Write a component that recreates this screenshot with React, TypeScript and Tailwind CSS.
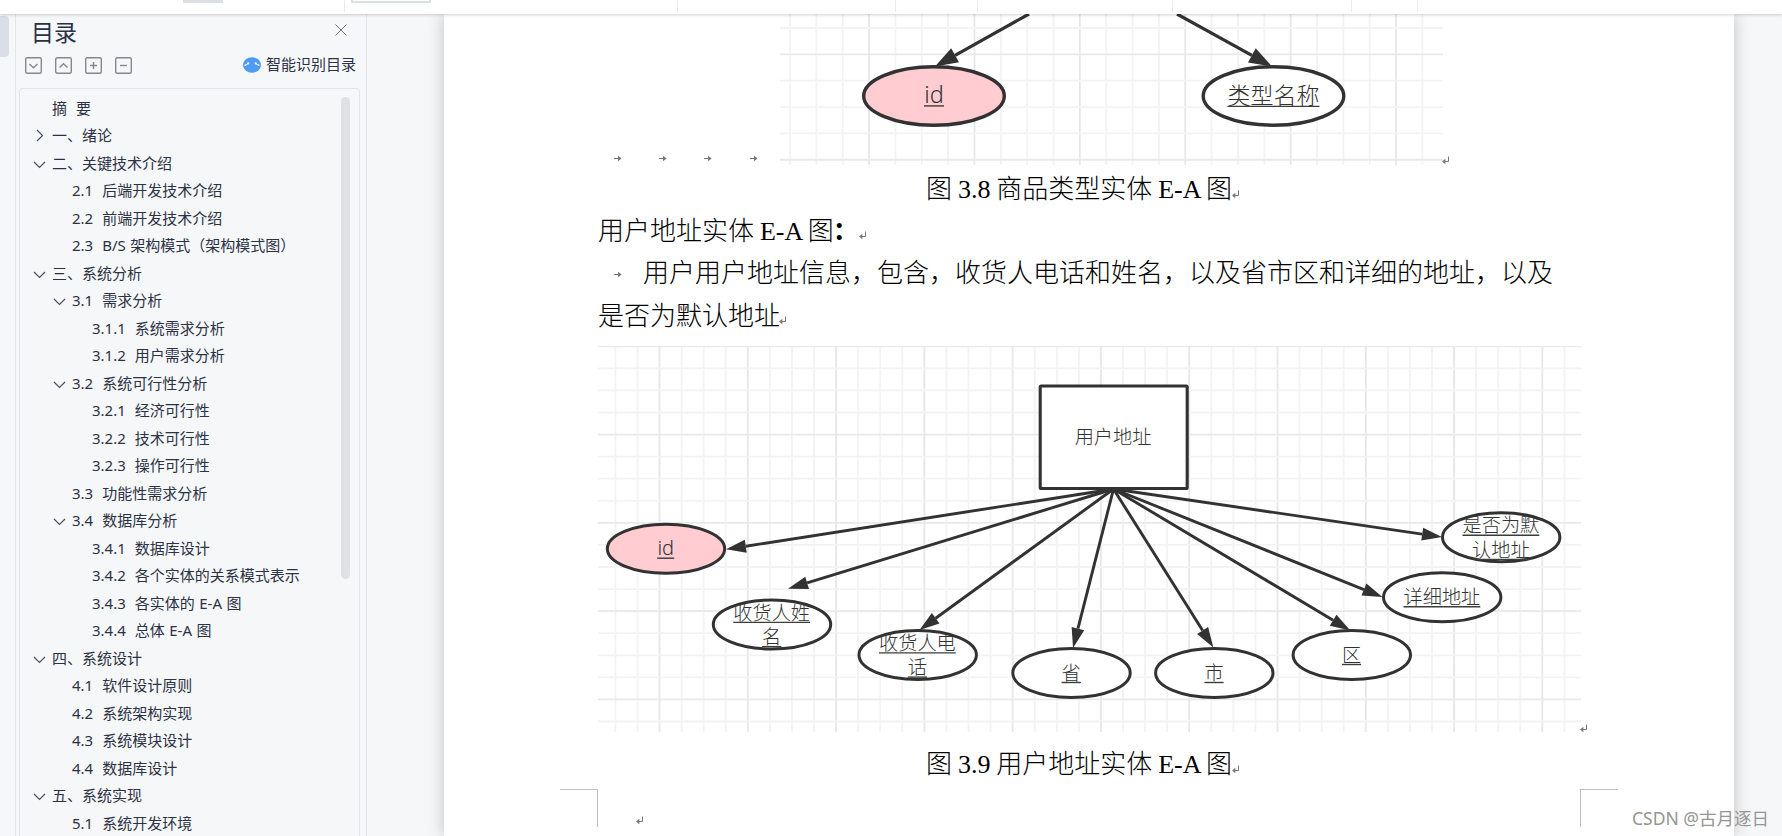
import { ReactNode } from 'react'

const outline = [
  { level: 0, label: '摘  要', arrow: '' },
  { level: 0, label: '一、绪论', arrow: 'right' },
  { level: 0, label: '二、关键技术介绍', arrow: 'down' },
  { level: 1, label: '2.1  后端开发技术介绍', arrow: '' },
  { level: 1, label: '2.2  前端开发技术介绍', arrow: '' },
  { level: 1, label: '2.3  B/S 架构模式（架构模式图）', arrow: '' },
  { level: 0, label: '三、系统分析', arrow: 'down' },
  { level: 1, label: '3.1  需求分析', arrow: 'down' },
  { level: 2, label: '3.1.1  系统需求分析', arrow: '' },
  { level: 2, label: '3.1.2  用户需求分析', arrow: '' },
  { level: 1, label: '3.2  系统可行性分析', arrow: 'down' },
  { level: 2, label: '3.2.1  经济可行性', arrow: '' },
  { level: 2, label: '3.2.2  技术可行性', arrow: '' },
  { level: 2, label: '3.2.3  操作可行性', arrow: '' },
  { level: 1, label: '3.3  功能性需求分析', arrow: '' },
  { level: 1, label: '3.4  数据库分析', arrow: 'down' },
  { level: 2, label: '3.4.1  数据库设计', arrow: '' },
  { level: 2, label: '3.4.2  各个实体的关系模式表示', arrow: '' },
  { level: 2, label: '3.4.3  各实体的 E-A 图', arrow: '' },
  { level: 2, label: '3.4.4  总体 E-A 图', arrow: '' },
  { level: 0, label: '四、系统设计', arrow: 'down' },
  { level: 1, label: '4.1  软件设计原则', arrow: '' },
  { level: 1, label: '4.2  系统架构实现', arrow: '' },
  { level: 1, label: '4.3  系统模块设计', arrow: '' },
  { level: 1, label: '4.4  数据库设计', arrow: '' },
  { level: 0, label: '五、系统实现', arrow: 'down' },
  { level: 1, label: '5.1  系统开发环境', arrow: '' },
]

const indents = ['pl-[13px]', 'pl-[33px]', 'pl-[53px]']

const toolIcons = ['M4.5 7l4 3.8L12.5 7', 'M4.5 10.5l4-3.8L12.5 10.5', 'M5 8.5h7M8.5 5v7', 'M5 8.5h7']

// coordinates are local to the 983x386 canvas
const attributes = [
  { x: 68, y: 202.7, lines: ['id'], tip: [128, 203.3], pink: true },
  { x: 174, y: 278.5, lines: ['收货人姓', '名'], tip: [190, 242.7] },
  { x: 319.7, y: 309, lines: ['收货人电', '话'], tip: [321.5, 284] },
  { x: 473.5, y: 327, lines: ['省'], tip: [475, 302] },
  { x: 616.3, y: 327, lines: ['市'], tip: [615.3, 301.5] },
  { x: 753.8, y: 309, lines: ['区'], tip: [752.3, 284.5] },
  { x: 844.2, y: 251.3, lines: ['详细地址'], tip: [784.5, 251] },
  { x: 903.2, y: 191.3, lines: ['是否为默', '认地址'], tip: [844, 191] },
]

function ReturnMark({ className = '' }: { className?: string }) {
  return (
    <svg width="8" height="9" viewBox="0 0 8 9" className={`shrink-0 ${className}`}>
      <path d="M6.5 0.5V5.5H2" fill="none" stroke="#777" />
      <path d="M0 5.5L3.4 2.8V8.2Z" fill="#777" />
    </svg>
  )
}

function TabMark({ className = '' }: { className?: string }) {
  return (
    <svg width="8" height="7" viewBox="0 0 8 7" className={`shrink-0 ${className}`}>
      <path d="M0 3.5H6" stroke="#777" />
      <path d="M4 0.8L7.6 3.5L4 6.2Z" fill="#777" />
    </svg>
  )
}

type GridProps = { w: number; h: number; x0: number; y0: number; step: number; majorX: number; majorY: number }

function Grid({ w, h, x0, y0, step, majorX, majorY }: GridProps) {
  const xs = Array.from({ length: Math.ceil((w - x0) / step) }, (_, i) => x0 + i * step)
  const ys = Array.from({ length: Math.ceil((h - y0) / step) }, (_, i) => y0 + i * step)
  return (
    <g strokeWidth="1.8">
      {xs.map((x, i) => (
        <line key={i} x1={x} x2={x} y1="0" y2={h} stroke={i % 4 === majorX ? '#e7e7e7' : '#f3f3f3'} />
      ))}
      {ys.map((y, i) => (
        <line key={i} x1="0" x2={w} y1={y} y2={y} stroke={i % 4 === majorY ? '#e9e9e9' : '#f3f3f3'} />
      ))}
    </g>
  )
}

function Arrow({ from, to, size, half, width }: { from: number[]; to: number[]; size: number; half: number; width: number }) {
  const dx = to[0] - from[0]
  const dy = to[1] - from[1]
  const len = Math.hypot(dx, dy)
  const ux = dx / len
  const uy = dy / len
  const bx = to[0] - ux * size
  const by = to[1] - uy * size
  return (
    <g>
      <line x1={from[0]} y1={from[1]} x2={bx} y2={by} stroke="#323232" strokeWidth={width} />
      <polygon
        fill="#323232"
        points={`${to[0]},${to[1]} ${bx - uy * half},${by + ux * half} ${bx + uy * half},${by - ux * half}`}
      />
    </g>
  )
}

function Label({ x, y, size, children, width }: { x: number; y: number; size: number; children: string; width: number }) {
  return (
    <g>
      <text x={x} y={y} fontSize={size} textAnchor="middle" fill="#323232">{children}</text>
      <line x1={x - width / 2} x2={x + width / 2} y1={y + 2.9} y2={y + 2.9} stroke="#3c3c3c" strokeWidth="1.4" />
    </g>
  )
}

function TypeFigure() {
  return (
    <svg width="663" height="151" viewBox="0 0 663 151" className="shrink-0 font-['Noto_Sans','Noto_Sans_CJK_SC',sans-serif] font-light">
      <Grid w={663} h={151} x0={10} y0={14} step={26.35} majorX={3} majorY={1} />
      <Arrow from={[249, 0]} to={[155, 52.5]} size={23} half={8} width={3.2} />
      <Arrow from={[397, 0]} to={[492, 52.5]} size={23} half={8} width={3.2} />
      <ellipse cx="154" cy="82" rx="70.3" ry="29.2" fill="#ffccd2" stroke="#323232" strokeWidth="3.4" />
      <ellipse cx="493.5" cy="82" rx="70.3" ry="29.2" fill="#fff" stroke="#323232" strokeWidth="3.4" />
      <Label x={154} y={89} size={23.5} width={20}>id</Label>
      <Label x={493.5} y={89.5} size={23} width={92}>类型名称</Label>
    </svg>
  )
}

function AddressFigure() {
  return (
    <svg width="983" height="386" viewBox="0 0 983 386" className="shrink-0 font-['Noto_Sans','Noto_Sans_CJK_SC',sans-serif] font-light">
      <Grid w={983} h={386} x0={17.4} y0={0.3} step={22.07} majorX={2} majorY={0} />
      {attributes.map((a) => (
        <Arrow key={a.lines[0]} from={[515.5, 143]} to={a.tip} size={20} half={6.5} width={2.9} />
      ))}
      <rect x="442.2" y="40" width="147" height="102.5" rx="1" fill="#fff" stroke="#323232" strokeWidth="3.1" />
      <text x="515" y="98" fontSize="19.2" textAnchor="middle" fill="#323232">用户地址</text>
      {attributes.map((a) => (
        <g key={a.lines[0]}>
          <ellipse cx={a.x} cy={a.y} rx="58.7" ry="24.5" fill={a.pink ? '#ffccd2' : '#fff'} stroke="#323232" strokeWidth="3" />
          {a.lines.map((text, i) => (
            <Label
              key={text}
              x={a.x - 0.3}
              y={a.lines.length > 1 ? a.y - 5 + i * 24.2 : a.y + 6.6}
              size={a.pink ? 20 : 19.2}
              width={a.pink ? 17 : text.length * 19.2}
            >
              {text}
            </Label>
          ))}
        </g>
      ))}
    </svg>
  )
}

function TopBar() {
  return (
    <header className="relative z-10 flex h-[14px] shrink-0 items-start bg-white shadow-[0_1px_3px_rgba(0,0,0,0.18)]">
      <div className="ml-[183px] h-[3px] w-10 bg-[#dce0e5]" />
      <div className="ml-[121px] h-3 w-px bg-[#e8eaec]" />
      <div className="ml-1.5 h-[3px] w-20 border-2 border-t-0 border-[#dce0e5]" />
      <div className="ml-[246px] h-3 w-px bg-[#ececec]" />
      <div className="ml-[217px] h-3 w-px bg-[#ececec]" />
      <div className="ml-[81px] h-3 w-px bg-[#ececec]" />
      <div className="ml-[194px] h-3 w-px bg-[#ececec]" />
      <div className="ml-[178px] h-3 w-px bg-[#ececec]" />
      <div className="ml-[65px] h-3 w-px bg-[#ececec]" />
    </header>
  )
}

function Sidebar() {
  return (
    <aside className="flex w-[352px] shrink-0 flex-col border-x border-[#e1e4e9] pl-[3px] pr-1.5 font-['Noto_Sans','Noto_Sans_CJK_SC',sans-serif] text-[#2b3245]">
      <div className="flex h-9 shrink-0 items-center justify-between pl-3 pr-[13px]">
        <h1 className="text-[23px] leading-none">目录</h1>
        <svg width="12" height="12" viewBox="0 0 12 12" className="mb-1">
          <path d="M0.5 0.5l11 11M11.5 0.5l-11 11" stroke="#6b7590" strokeWidth="1" />
        </svg>
      </div>
      <div className="flex h-[38px] shrink-0 items-start pl-1.5 pt-[7px]">
        <div className="flex gap-[13px]">
          {toolIcons.map((d) => (
            <svg key={d} width="17" height="17" viewBox="0 0 17 17" fill="none" stroke="#85888d" strokeWidth="1.4">
              <rect x="0.7" y="0.7" width="15.6" height="15.6" rx="1.5" />
              <path d={d} />
            </svg>
          ))}
        </div>
        <svg width="18" height="16" viewBox="0 0 18 16" className="ml-[111px]">
          <ellipse cx="9" cy="8" rx="9" ry="7.8" fill="#4d9bf5" />
          <path d="M2.5 8.2L5.2 6.6M15.5 8.2L12.8 6.6" stroke="#fff" strokeWidth="1" />
          <circle cx="5.2" cy="6.4" r="1.1" fill="#fff" />
          <circle cx="12.8" cy="6.4" r="1.1" fill="#fff" />
          <circle cx="2.4" cy="8.2" r="0.9" fill="#fff" />
          <circle cx="15.6" cy="8.2" r="0.9" fill="#fff" />
        </svg>
        <span className="ml-[5px] text-[15px] leading-none">智能识别目录</span>
      </div>
      <div className="flex min-h-0 flex-1 rounded-t-sm border border-b-0 border-[#e1e4e9]">
        <ul className="flex-1 pt-[5.5px] [word-spacing:0.6px]">
          {outline.map((item) => (
            <li key={item.label} className={`flex h-[27.5px] items-center whitespace-pre text-[15px] leading-none ${indents[item.level]}`}>
              <svg width="13" height="13" viewBox="0 0 13 13" fill="none" stroke="#4a5164" strokeWidth="1.2" className="mr-[6px] shrink-0">
                {item.arrow === 'down' && <path d="M1 5l5.5 5.5L12 5" />}
                {item.arrow === 'right' && <path d="M4 1l5.5 5.5L4 12" />}
              </svg>
              {item.label}
            </li>
          ))}
        </ul>
        <div className="mr-[9px] mt-2 h-[482px] w-[9px] rounded-full bg-[#dfe2e5]" />
      </div>
    </aside>
  )
}

function Line({ children, className = '' }: { children: ReactNode; className?: string }) {
  return <p className={`flex h-[42.2px] items-center whitespace-pre ${className}`}>{children}</p>
}

function Page() {
  return (
    <main className="h-[822px] w-[1290px] shrink-0 overflow-hidden bg-white font-['Liberation_Serif','Noto_Sans_CJK_SC',serif] text-[26px] leading-none font-light text-black shadow-[0_0_16px_rgba(0,0,0,0.22)] [word-spacing:-0.6px]">
      <div className="flex items-end pl-[170px]">
        <div className="mb-[3px] flex w-[166px] gap-[37.2px]">
          <TabMark />
          <TabMark />
          <TabMark />
          <TabMark />
        </div>
        <TypeFigure />
        <ReturnMark className="-ml-px" />
      </div>
      <Line className="mt-1 pl-[482px]">
        图 3.8 商品类型实体 E-A 图<ReturnMark className="mt-[9px]" />
      </Line>
      <Line className="pl-[154px]">
        用户地址实体 E-A 图<b className="-ml-px font-bold">：</b><ReturnMark className="mt-[7px]" />
      </Line>
      <Line className="pl-[170px]">
        <TabMark className="mr-[21px]" />
        用户用户地址信息，包含，收货人电话和姓名，以及省市区和详细的地址，以及
      </Line>
      <Line className="pl-[154px]">
        是否为默认地址<ReturnMark className="-ml-px mt-[7px]" />
      </Line>
      <div className="mt-2 flex items-end pl-[154px]">
        <AddressFigure />
        <ReturnMark className="-ml-px -mb-px" />
      </div>
      <Line className="mt-3 pl-[482px]">
        图 3.9 用户地址实体 E-A 图<ReturnMark className="mt-[9px]" />
      </Line>
      <div className="mt-[3px] flex pl-[116px]">
        <div className="h-[38px] w-[38px] border-r border-t border-[#bdbdbd]" />
        <ReturnMark className="ml-[38px] mt-[27px]" />
        <div className="ml-[936px] h-[38px] w-[38px] border-l border-t border-[#bdbdbd]" />
      </div>
    </main>
  )
}

export default function App() {
  return (
    <div className="relative flex h-[836px] w-[1782px] flex-col overflow-hidden bg-[#f6f7f9]">
      <TopBar />
      <div className="flex min-h-0 flex-1">
        <div className="w-[15px] shrink-0 pt-0.5">
          <div className="h-[41px] w-[9px] rounded-r-sm bg-[#d9dee7]" />
        </div>
        <Sidebar />
        <div className="w-[77px] shrink-0" />
        <Page />
      </div>
      <div className="absolute bottom-[9px] right-[13px] whitespace-nowrap font-['Noto_Sans','Noto_Sans_CJK_SC',sans-serif] text-[17.5px] leading-none text-[#959595]">
        CSDN @古月逐日
      </div>
    </div>
  )
}
